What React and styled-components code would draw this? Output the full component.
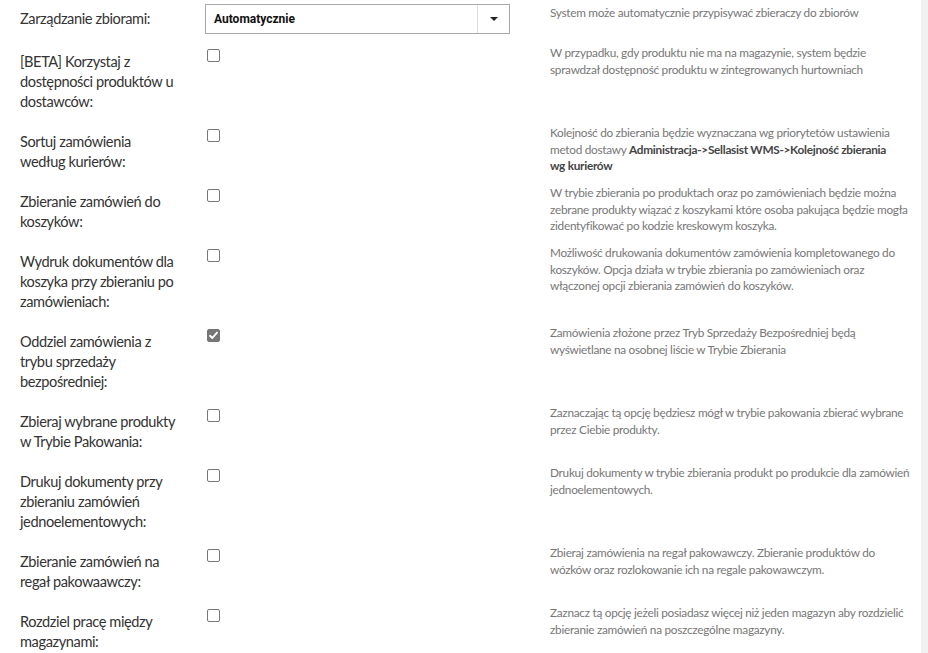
import React from 'react';
import styled, { createGlobalStyle } from 'styled-components';

const GlobalStyle = createGlobalStyle`
  html, body {
    margin: 0;
    padding: 0;
    background: #fff;
    overflow: hidden;
  }
`

const Page = styled.div`
  display: flex;
  width: 928px;
  height: 653px;
  font-family: Lato, "Open Sans", sans-serif;
`

const Content = styled.div`
  flex: 1;
  padding: 2px 0 0 20px;
`

const ScrollTrack = styled.div`
  width: 7px;
  background: #f1f1f1;
`

const Row = styled.div`
  display: grid;
  grid-template-columns: 185px 305px 1fr;
  align-items: start;
  margin-bottom: ${p => p.$first ? '11px' : '13px'};
`

const Label = styled.div`
  padding-top: 7px;
  font-size: 14.6px;
  line-height: 20px;
  color: #333;
  letter-spacing: -0.4px;
  white-space: nowrap;
`

const Control = styled.div`
  padding-top: ${p => p.$first ? '2px' : '4px'};
  padding-left: ${p => p.$first ? '0' : '2px'};
`

const Desc = styled.div`
  padding-left: 40px;
  padding-top: ${p => p.$first ? '3px' : '0'};
  margin-bottom: -10px;
  font-size: 11.8px;
  line-height: 16.5px;
  color: #777;
  letter-spacing: -0.28px;
  white-space: nowrap;

  b {
    color: #444;
    font-weight: 700;
  }
`

const Select = styled.div`
  display: flex;
  height: 30px;
  box-sizing: border-box;
  border: 1px solid #a9a9a9;
  background: #fff;
`

const SelectValue = styled.div`
  flex: 1;
  display: flex;
  align-items: center;
  padding-left: 8px;
  font-family: Roboto, "Liberation Sans", sans-serif;
  font-weight: 700;
  font-size: 12px;
  color: #111;
`

const SelectArrow = styled.div`
  width: 31px;
  border-left: 1px solid #ddd;
  display: flex;
  align-items: center;
  justify-content: center;

  &::after {
    content: '';
    border-left: 4px solid transparent;
    border-right: 4px solid transparent;
    border-top: 4px solid #222;
  }
`

const Box = styled.span`
  display: block;
  width: 13px;
  height: 13px;
  box-sizing: border-box;
  border-radius: 2px;
  border: 1px solid ${p => p.$checked ? '#767676' : '#777'};
  background: ${p => p.$checked ? '#767676' : '#fff'};
  position: relative;
`

const Check = ({ checked }) => (
  <Box $checked={checked}>
    {checked && (
      <svg width="11" height="11" viewBox="0 0 11 11" style={{ position: 'absolute', left: 0, top: 0 }}>
        <path d="M2 5.8 L4.3 8 L9 2.6" fill="none" stroke="#fff" strokeWidth="1.9" strokeLinecap="round" strokeLinejoin="round" />
      </svg>
    )}
  </Box>
)

const rows = [
  {
    label: ['[BETA] Korzystaj z', 'dostępności produktów u', 'dostawców:'],
    desc: ['W przypadku, gdy produktu nie ma na magazynie, system będzie', 'sprawdzał dostępność produktu w zintegrowanych hurtowniach'],
  },
  {
    label: ['Sortuj zamówienia', 'według kurierów:'],
    desc: [
      'Kolejność do zbierania będzie wyznaczana wg priorytetów ustawienia',
      <>metod dostawy <b>Administracja-&gt;Sellasist WMS-&gt;Kolejność zbierania</b></>,
      <b>wg kurierów</b>,
    ],
  },
  {
    label: ['Zbieranie zamówień do', 'koszyków:'],
    desc: [
      'W trybie zbierania po produktach oraz po zamówieniach będzie można',
      'zebrane produkty wiązać z koszykami które osoba pakująca będzie mogła',
      'zidentyfikować po kodzie kreskowym koszyka.',
    ],
  },
  {
    label: ['Wydruk dokumentów dla', 'koszyka przy zbieraniu po', 'zamówieniach:'],
    desc: [
      'Możliwość drukowania dokumentów zamówienia kompletowanego do',
      'koszyków. Opcja działa w trybie zbierania po zamówieniach oraz',
      'włączonej opcji zbierania zamówień do koszyków.',
    ],
  },
  {
    label: ['Oddziel zamówienia z', 'trybu sprzedaży', 'bezpośredniej:'],
    checked: true,
    desc: ['Zamówienia złożone przez Tryb Sprzedaży Bezpośredniej będą', 'wyświetlane na osobnej liście w Trybie Zbierania'],
  },
  {
    label: ['Zbieraj wybrane produkty', 'w Trybie Pakowania:'],
    desc: ['Zaznaczając tą opcję będziesz mógł w trybie pakowania zbierać wybrane', 'przez Ciebie produkty.'],
  },
  {
    label: ['Drukuj dokumenty przy', 'zbieraniu zamówień', 'jednoelementowych:'],
    desc: ['Drukuj dokumenty w trybie zbierania produkt po produkcie dla zamówień', 'jednoelementowych.'],
  },
  {
    label: ['Zbieranie zamówień na', 'regał pakowaawczy:'],
    desc: ['Zbieraj zamówienia na regał pakowawczy. Zbieranie produktów do', 'wózków oraz rozlokowanie ich na regale pakowawczym.'],
  },
  {
    label: ['Rozdziel pracę między', 'magazynami:'],
    desc: ['Zaznacz tą opcję jeżeli posiadasz więcej niż jeden magazyn aby rozdzielić', 'zbieranie zamówień na poszczególne magazyny.'],
  },
]

const Lines = ({ lines }) => lines.map((l, i) => <div key={i}>{l}</div>)

export default function App() {
  return (
    <>
      <GlobalStyle />
      <Page>
        <Content>
          <Row $first>
            <Label>Zarządzanie zbiorami:</Label>
            <Control $first>
              <Select>
                <SelectValue>Automatycznie</SelectValue>
                <SelectArrow />
              </Select>
            </Control>
            <Desc $first>System może automatycznie przypisywać zbieraczy do zbiorów</Desc>
          </Row>
          {rows.map((r, i) => (
            <Row key={i}>
              <Label><Lines lines={r.label} /></Label>
              <Control><Check checked={r.checked} /></Control>
              <Desc><Lines lines={r.desc} /></Desc>
            </Row>
          ))}
        </Content>
        <ScrollTrack />
      </Page>
    </>
  );
}
